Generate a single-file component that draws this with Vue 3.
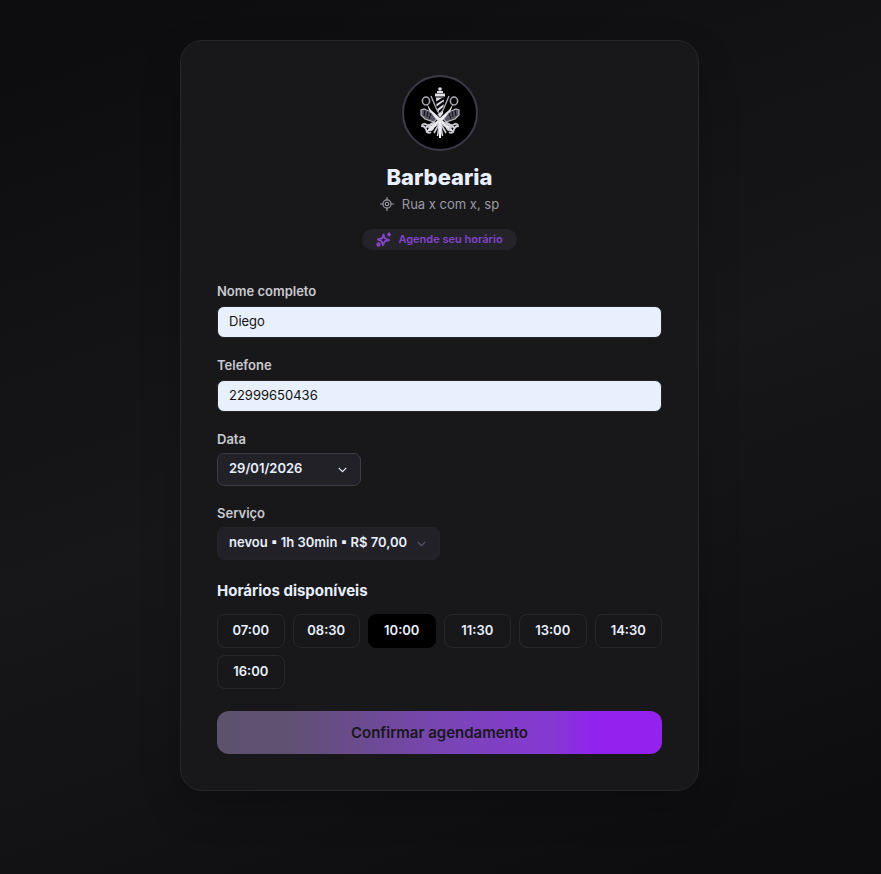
<template>
  <main class="page">
    <form class="card" @submit.prevent="confirmar">
      <header class="header">
        <svg class="logo" viewBox="0 0 72 72" role="img" aria-label="Barbearia">
          <circle cx="36" cy="36" r="36" fill="#000" />
          <!-- poste -->
          <g fill="#e0e0e6">
            <circle cx="36" cy="12" r="1.8" />
            <path d="M33 14h6v2h-6zM31 16.500h10v3h-10z" />
            <path d="M32 20.500h8l-1 16-3 4-3-4z" />
          </g>
          <path d="M32 26l8-5M32 31.500l8-6M32.500 37l7-6" stroke="#09090b" stroke-width="2.200" />
          <!-- tesouras, pentes e arabescos -->
          <g v-for="lado in [1, -1]" :key="lado" :transform="lado === 1 ? '' : 'matrix(-1 0 0 1 72 0)'">
            <path d="M17 33l3-1 9 4 4 5-3 4-9-3-4-4z" fill="#56545f" stroke="#b9b8c3" stroke-width="1.200" />
            <path d="M21 33l-1 6M24 34l-1 6M27 36l-2 6" stroke="#0d0d0f" stroke-width="1" />
            <ellipse cx="22" cy="24" rx="3.600" ry="4" fill="none" stroke="#a9a8b2" stroke-width="1.600" />
            <path d="M27 19l5 12 3 5" fill="none" stroke="#aaa9b3" stroke-width="1.400" />
            <path d="M23 27l4 6 9 8 12 11 2 4-7-4-12-11-6-8z" fill="#e8e8ed" />
            <path d="M31 46c-4-1-4 3-8 2-3-2-5-1-5 1 2 0 3 1 4 3 0 3 2 5 5 3M31 47c-4 0-6 2-5 5 1 2 3 1 3-1M22 50l5-1" fill="none" stroke="#cdccd5" stroke-width="1.800" />
            <path d="M35 47l-5 9M35.500 47l-2 12" stroke="#d0d0d8" stroke-width="1.600" />
          </g>
          <path d="M36 45v16" stroke="#f1f1f5" stroke-width="2" />
        </svg>
        <h1 class="title">Barbearia</h1>
        <p class="address">
          <svg class="icon" viewBox="0 0 24 24" aria-hidden="true">
            <path d="M1 12h4M19 12h4M12 1v4M12 19v4" />
            <circle cx="12" cy="12" r="7" />
            <circle cx="12" cy="12" r="3" />
          </svg>
          Rua x com x, sp
        </p>
        <p class="badge">
          <svg class="icon sparkles" viewBox="0 0 24 24" aria-hidden="true">
            <path d="M12 4l2 6 7 3-7 2-3 6-2-6-6-3 7-2z" />
            <path d="M21 2v4M19 4h4" />
            <circle cx="4" cy="20" r="2" />
          </svg>
          Agende seu horário
        </p>
      </header>

      <div class="field">
        <label for="nome">Nome completo</label>
        <input id="nome" v-model="nome" type="text" />
      </div>
      <div class="field">
        <label for="telefone">Telefone</label>
        <input id="telefone" v-model="telefone" type="tel" />
      </div>
      <div class="field compact">
        <label for="data">Data</label>
        <div class="select-box date">
          <select id="data" v-model="data">
            <option>29/01/2026</option>
          </select>
          <svg class="chevron" viewBox="0 0 24 24" aria-hidden="true"><path d="M5 9l7 7 7-7" /></svg>
        </div>
      </div>
      <div class="field compact">
        <label for="servico">Serviço</label>
        <div class="select-box service">
          <select id="servico" v-model="servico">
            <option>nevou ▪ 1h 30min ▪ R$ 70,00</option>
          </select>
          <svg class="chevron" viewBox="0 0 24 24" aria-hidden="true"><path d="M5 9l7 7 7-7" /></svg>
        </div>
      </div>

      <h2 class="subtitle">Horários disponíveis</h2>
      <div class="times">
        <button
          v-for="h in horarios"
          :key="h"
          type="button"
          class="time"
          :class="{ active: h === horario }"
          :aria-pressed="h === horario"
          @click="horario = h"
        >
          {{ h }}
        </button>
      </div>

      <button class="submit" type="submit">Confirmar agendamento</button>
    </form>
  </main>
</template>

<script setup>
import { ref } from "vue";

const nome = ref("Diego");
const telefone = ref("22999650436");
const data = ref("29/01/2026");
const servico = ref("nevou ▪ 1h 30min ▪ R$ 70,00");
const horario = ref("10:00");
const horarios = ["07:00", "08:30", "10:00", "11:30", "13:00", "14:30", "16:00"];

const emit = defineEmits(["confirmar"]);

function confirmar() {
  emit("confirmar", {
    nome: nome.value,
    telefone: telefone.value,
    data: data.value,
    servico: servico.value,
    horario: horario.value,
  });
}
</script>

<style>
body {
  margin: 0;
  background: #0d0d0f;
}
</style>

<style scoped>
.page {
  box-sizing: border-box;
  min-height: 100vh;
  padding: 40px 18px 40px 16px;
  background: linear-gradient(160deg, #0c0c0e 0%, #17171a 50%, #0c0c0e 100%);
  font-family: Inter, "Open Sans", sans-serif;
  color: #e9effd;
}

.card {
  box-sizing: border-box;
  max-width: 519px;
  margin: 0 auto;
  padding: 34px 36px 36px;
  border: 1px solid #26262b;
  border-radius: 22px;
  background: #18181a;
  box-shadow: 0 16px 40px rgba(0, 0, 0, 0.2);
}

.header {
  display: flex;
  flex-direction: column;
  align-items: center;
  margin-bottom: 32px;
}

.logo {
  width: 72px;
  height: 72px;
  border: 2px solid #3c3948;
  border-radius: 50%;
}

.title {
  margin: 12px 0 0;
  font-size: 22px;
  font-weight: 800;
  line-height: 28px;
}

.address {
  display: flex;
  align-items: center;
  gap: 8px;
  margin: 3px 0 0;
  font-size: 13px;
  line-height: 20px;
  color: #9b9aa3;
}

.badge {
  display: flex;
  align-items: center;
  gap: 7px;
  margin: 15px 0 0;
  padding: 0 14px;
  border-radius: 12px;
  background: #242329;
  font-size: 11px;
  font-weight: 600;
  line-height: 21px;
  color: #8344c9;
}

.icon {
  width: 14px;
  height: 14px;
  fill: none;
  stroke: currentColor;
  stroke-width: 2;
  stroke-linecap: round;
  stroke-linejoin: round;
}

.sparkles {
  width: 15px;
  height: 15px;
  stroke-width: 3;
}

.field {
  margin-bottom: 18px;
}

.field label {
  display: block;
  margin-bottom: 6px;
  font-size: 13px;
  font-weight: 600;
  line-height: 18px;
  color: #c9c9d0;
}

.compact label {
  margin-bottom: 5px;
}

.field input {
  display: block;
  box-sizing: border-box;
  width: 100%;
  height: 32px;
  padding: 0 11px 2px;
  border: 1px solid #242329;
  border-radius: 7px;
  background: #e8f0fe;
  font-family: inherit;
  font-size: 13px;
  color: #111114;
}

.select-box {
  position: relative;
  max-width: 100%;
}

.select-box select {
  appearance: none;
  display: block;
  box-sizing: border-box;
  width: 100%;
  height: 33px;
  padding: 0 30px 3px 11px;
  border: 1px solid #242329;
  border-radius: 7px;
  background: #222127;
  font-family: inherit;
  font-size: 13px;
  font-weight: 600;
  color: #e9effd;
}

.date {
  width: 144px;
}

.date select {
  border-color: #3e3b4b;
}

.service {
  width: 223px;
}

.chevron {
  position: absolute;
  top: 10px;
  right: 12px;
  width: 13px;
  height: 13px;
  fill: none;
  stroke: #e9effd;
  stroke-width: 2;
  pointer-events: none;
}

.service .chevron {
  stroke: #5c5770;
}

.subtitle {
  margin: 21px 0 13px;
  font-size: 15px;
  font-weight: 700;
  line-height: 20px;
}

.times {
  display: grid;
  grid-template-columns: repeat(auto-fill, minmax(64px, 1fr));
  gap: 7px 8px;
}

.time {
  height: 34px;
  padding: 0 0 3px;
  border: 1px solid #28272d;
  border-radius: 8px;
  background: transparent;
  font-family: inherit;
  font-size: 13px;
  font-weight: 600;
  color: #e9effd;
  cursor: pointer;
}

.time.active {
  border-color: #000;
  background: #000;
}

.submit {
  display: block;
  width: 100%;
  height: 43px;
  margin-top: 22px;
  border: none;
  border-radius: 12px;
  background: linear-gradient(90deg, #5b526e 0%, #5f5170 15%, #7c43bb 55%, #8539d2 75%, #9322ef 85%);
  font-family: inherit;
  font-size: 15px;
  font-weight: 600;
  color: #18181a;
  cursor: pointer;
}
</style>
